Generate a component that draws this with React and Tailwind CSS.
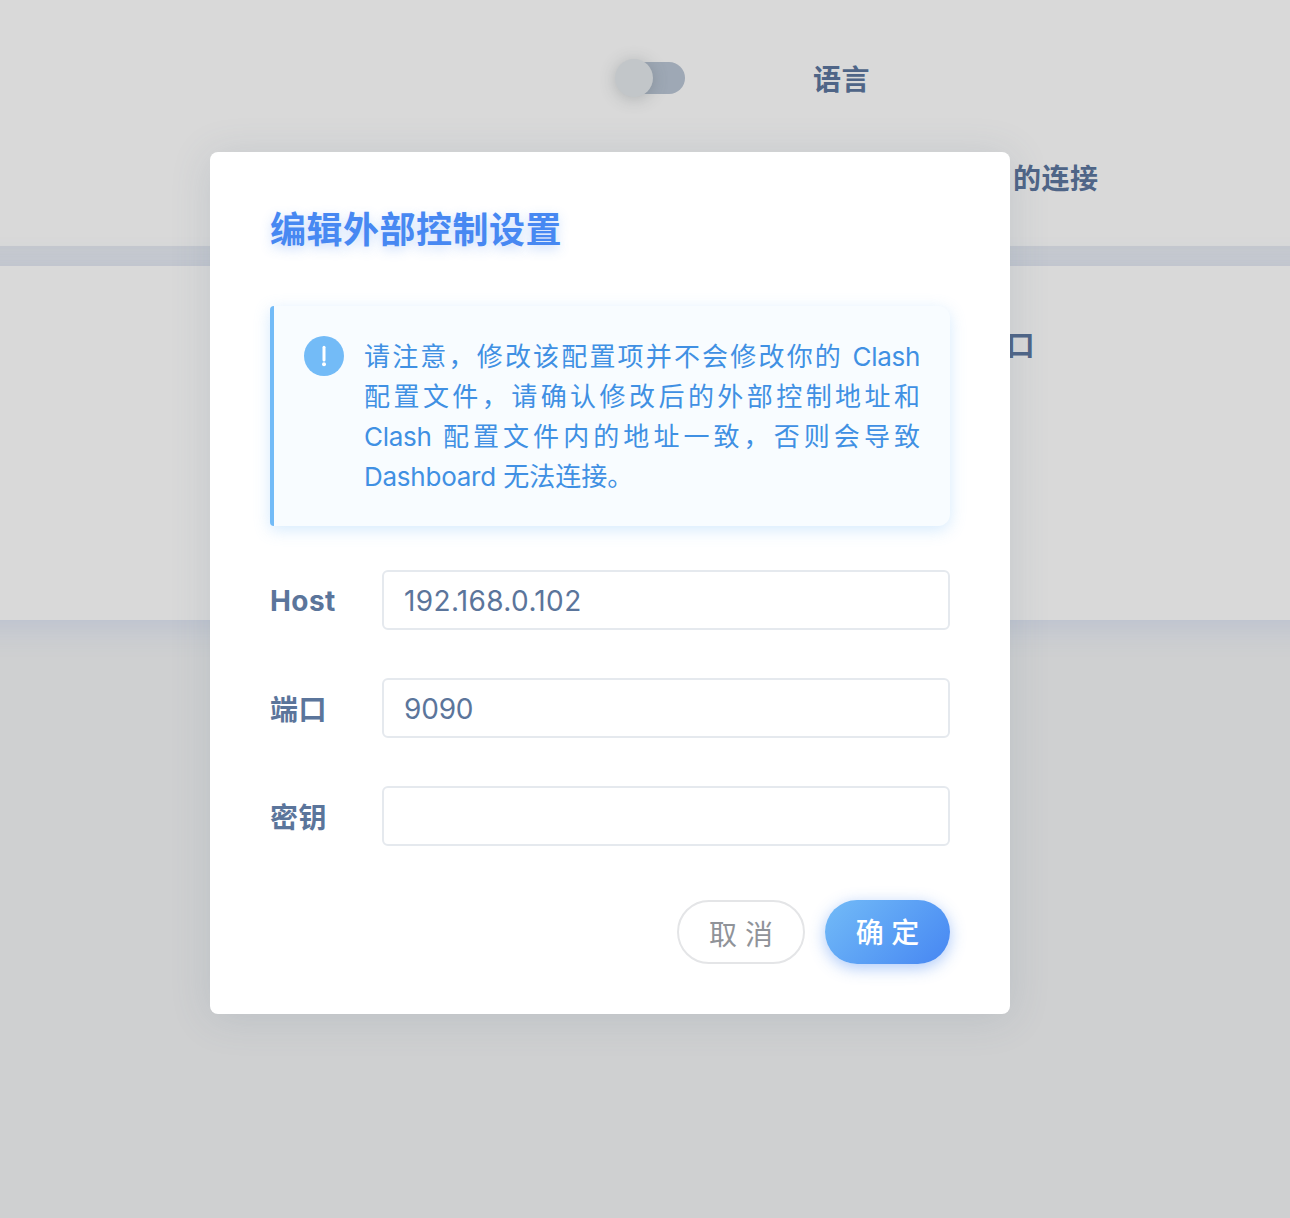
const notice = [
  '请注意，修改该配置项并不会修改你的 Clash',
  '配置文件，请确认修改后的外部控制地址和',
  'Clash 配置文件内的地址一致，否则会导致',
];

const fields = [
  { label: 'Host', value: '192.168.0.102', labelStyle: 'pt-0.5', tracking: 'tracking-[0.35px]' },
  { label: '端口', value: '9090', labelStyle: 'pt-[3px]', tracking: 'tracking-[-0.2px]' },
  { label: '密钥', value: '', labelStyle: 'pt-[3px]', tracking: 'tracking-normal' },
];

function Background() {
  return (
    <div className="h-[1218px] overflow-hidden bg-[#cfd0d1] text-[28px] leading-8 font-bold tracking-[0.5px] text-[#4f6587]">
      <section className="-mx-20 h-[246px] bg-[#d9d9d9] px-20 pt-[62px] shadow-[0_4px_32px_rgba(70,110,200,0.1)]">
        <div className="flex h-8 items-center pl-[617px]">
          <div className="flex h-8 w-[68px] items-center rounded-full bg-[#9ea8b5]">
            <span className="-ml-0.5 size-[38px] shrink-0 rounded-full bg-[#c2c6c9] shadow-[0_2px_16px_rgba(80,88,92,0.3)]" />
          </div>
          <span className="ml-[128px] pt-[3px]">语言</span>
        </div>
        <div className="mt-[68px] flex h-8 items-center pt-px pl-[1013px]">的连接</div>
      </section>
      <section className="relative -mx-20 mt-5 h-[354px] bg-[#d9d9d9] px-20 pt-[64px] shadow-[0_4px_32px_rgba(70,110,200,0.18)]">
        <div className="flex h-8 items-center pl-[1006.5px]">口</div>
      </section>
    </div>
  );
}

function Field({ label, value, labelStyle, tracking }) {
  return (
    <label className="flex h-[60px] items-center">
      <span className={`w-28 text-[28px] font-bold tracking-[0.4px] ${labelStyle}`}>{label}</span>
      <input
        type="text"
        defaultValue={value}
        className={`h-[60px] w-[568px] rounded-md border-2 border-[#e5e9ee] bg-white px-5 pt-0.5 text-[28px] outline-none ${tracking}`}
      />
    </label>
  );
}

export default function App() {
  return (
    <div className="relative h-[1218px] overflow-hidden font-[Inter,'Noto_Sans_CJK_SC',sans-serif]">
      <Background />
      <div className="absolute inset-0 flex items-start pt-[152px] pl-[210px]">
        <div
          role="dialog"
          className="h-[862px] w-[800px] rounded-lg bg-white px-[60px] pt-[53px] text-[#5b759b] shadow-[0_4px_40px_rgba(80,105,130,0.16)]"
        >
          <h1 className="h-[50px] text-[36px] leading-[50px] font-bold tracking-[0.5px] text-[#4788f2] [text-shadow:0_4px_12px_rgba(71,136,242,0.3)]">
            编辑外部控制设置
          </h1>
          <div className="mt-[51px] flex h-[220px] rounded-r-xl rounded-l-sm border-l-4 border-[#73bbf7] bg-[#f8fcff] pt-[30px] pr-[30px] pl-[30px] shadow-[0_4px_16px_rgba(115,187,247,0.3)]">
            <svg viewBox="0 0 40 40" className="size-10 shrink-0">
              <circle cx="20" cy="20" r="20" fill="#73bbf7" />
              <path d="M20 11.2V24" stroke="white" strokeWidth="3" strokeLinecap="round" />
              <circle cx="20" cy="28.3" r="2" fill="white" />
            </svg>
            <div className="ml-5 w-[556px] pt-px text-[26px] leading-10 text-[#4090e3]">
              {notice.map((line) => (
                <p key={line} className="h-10 whitespace-nowrap [text-align-last:justify]">
                  {line.split(/(Clash)/).map((part, i) =>
                    part === 'Clash' ? (
                      <span key={i} className="tracking-[-0.3px]">
                        {part}
                      </span>
                    ) : (
                      part
                    ),
                  )}
                </p>
              ))}
              <p className="h-10">
                <span className="tracking-[-0.25px]">Dashboard</span> 无法连接。
              </p>
            </div>
          </div>
          <div className="mt-11 flex flex-col gap-12">
            {fields.map((f) => (
              <Field key={f.label} {...f} />
            ))}
          </div>
          <div className="mt-[54px] flex justify-end gap-5 text-[28px]">
            <button className="flex h-16 w-32 items-center justify-center rounded-full border-2 border-[#e4e5e7] bg-white pt-1.5 text-[#909399]">
              取 消
            </button>
            <button className="flex h-16 w-[125px] items-center justify-center rounded-full bg-linear-135 from-[#73bbf7] to-[#4786f2] pt-0.5 font-medium text-white shadow-[0_4px_16px_rgba(71,136,242,0.45)]">
              确 定
            </button>
          </div>
        </div>
      </div>
    </div>
  );
}
